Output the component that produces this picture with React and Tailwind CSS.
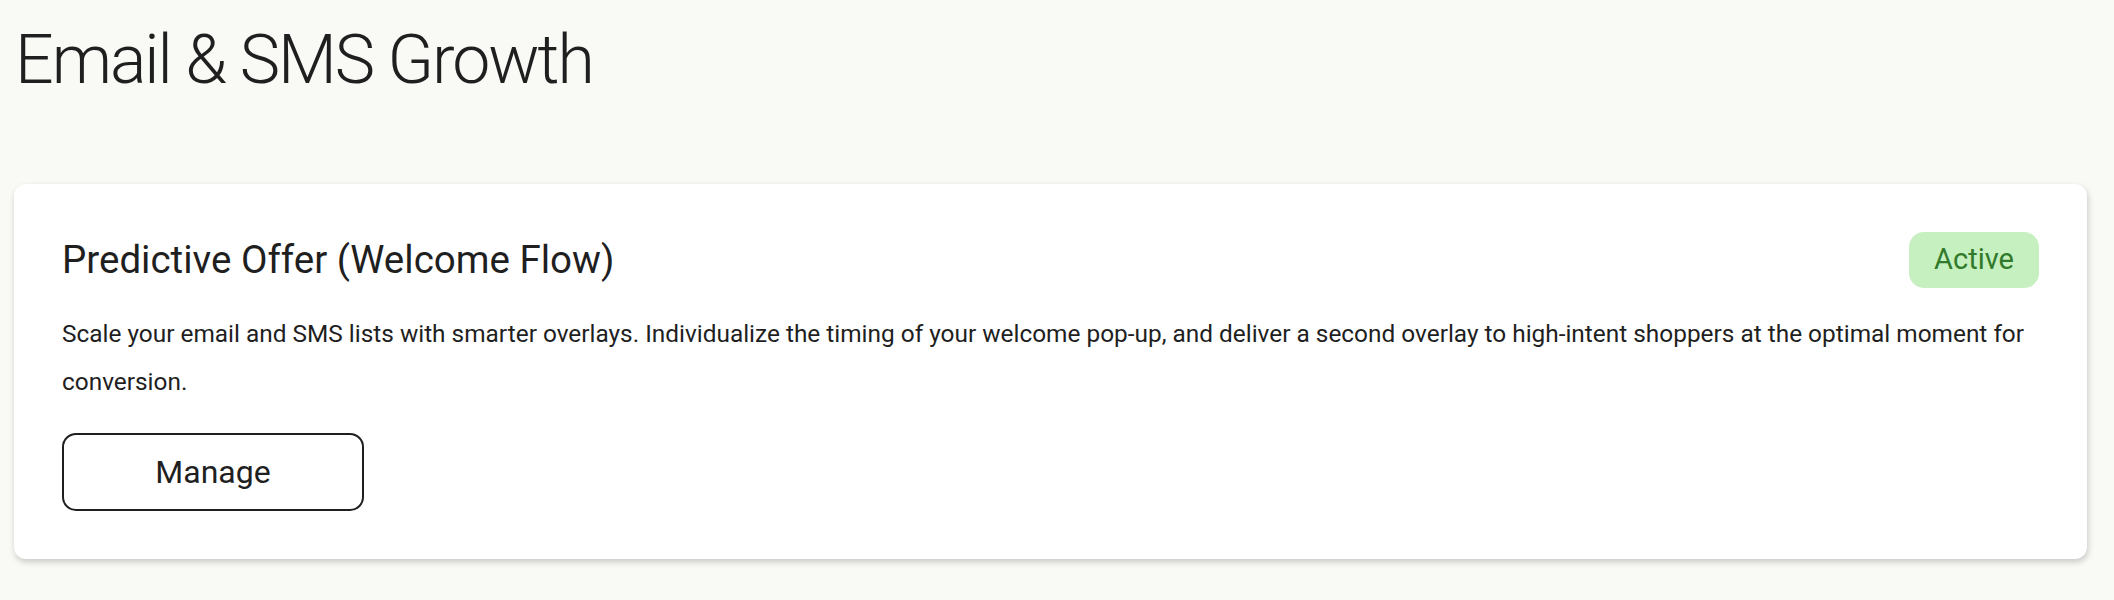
export default function App() {
  return (
    <div className="min-h-screen bg-[#f9f9f6] px-[14px] pt-[24px] font-['Roboto',sans-serif] text-[#1f1f1f]">
      <h1 className="pl-[1px] text-[68px] font-light leading-[72px] tracking-[-0.03em]">Email &amp; SMS Growth</h1>

      {/* Predictive offer card */}
      <div className="mt-[88px] w-[2073px] rounded-xl bg-white p-12 shadow-[1px_3px_6px_rgba(0,0,0,0.2)]">
        <div className="flex items-center justify-between">
          <h2 className="text-[38.5px] leading-[44px]">Predictive Offer (Welcome Flow)</h2>
          <span className="flex h-[56px] items-center rounded-[15px] bg-[#c6f0bf] px-[25px] text-[29px] text-[#327a2b]">
            Active
          </span>
        </div>
        <p className="mt-[22px] text-[24.4px] leading-[48px]">
          Scale your email and SMS lists with smarter overlays. Individualize the timing of your welcome pop-up, and
          deliver a second overlay to high-intent shoppers at the optimal moment for conversion.
        </p>
        <button className="mt-[27px] flex h-[78px] w-[302px] items-center justify-center rounded-[14px] border-2 border-[#1f1f1f] bg-white text-[32px]">
          Manage
        </button>
      </div>
    </div>
  );
}
